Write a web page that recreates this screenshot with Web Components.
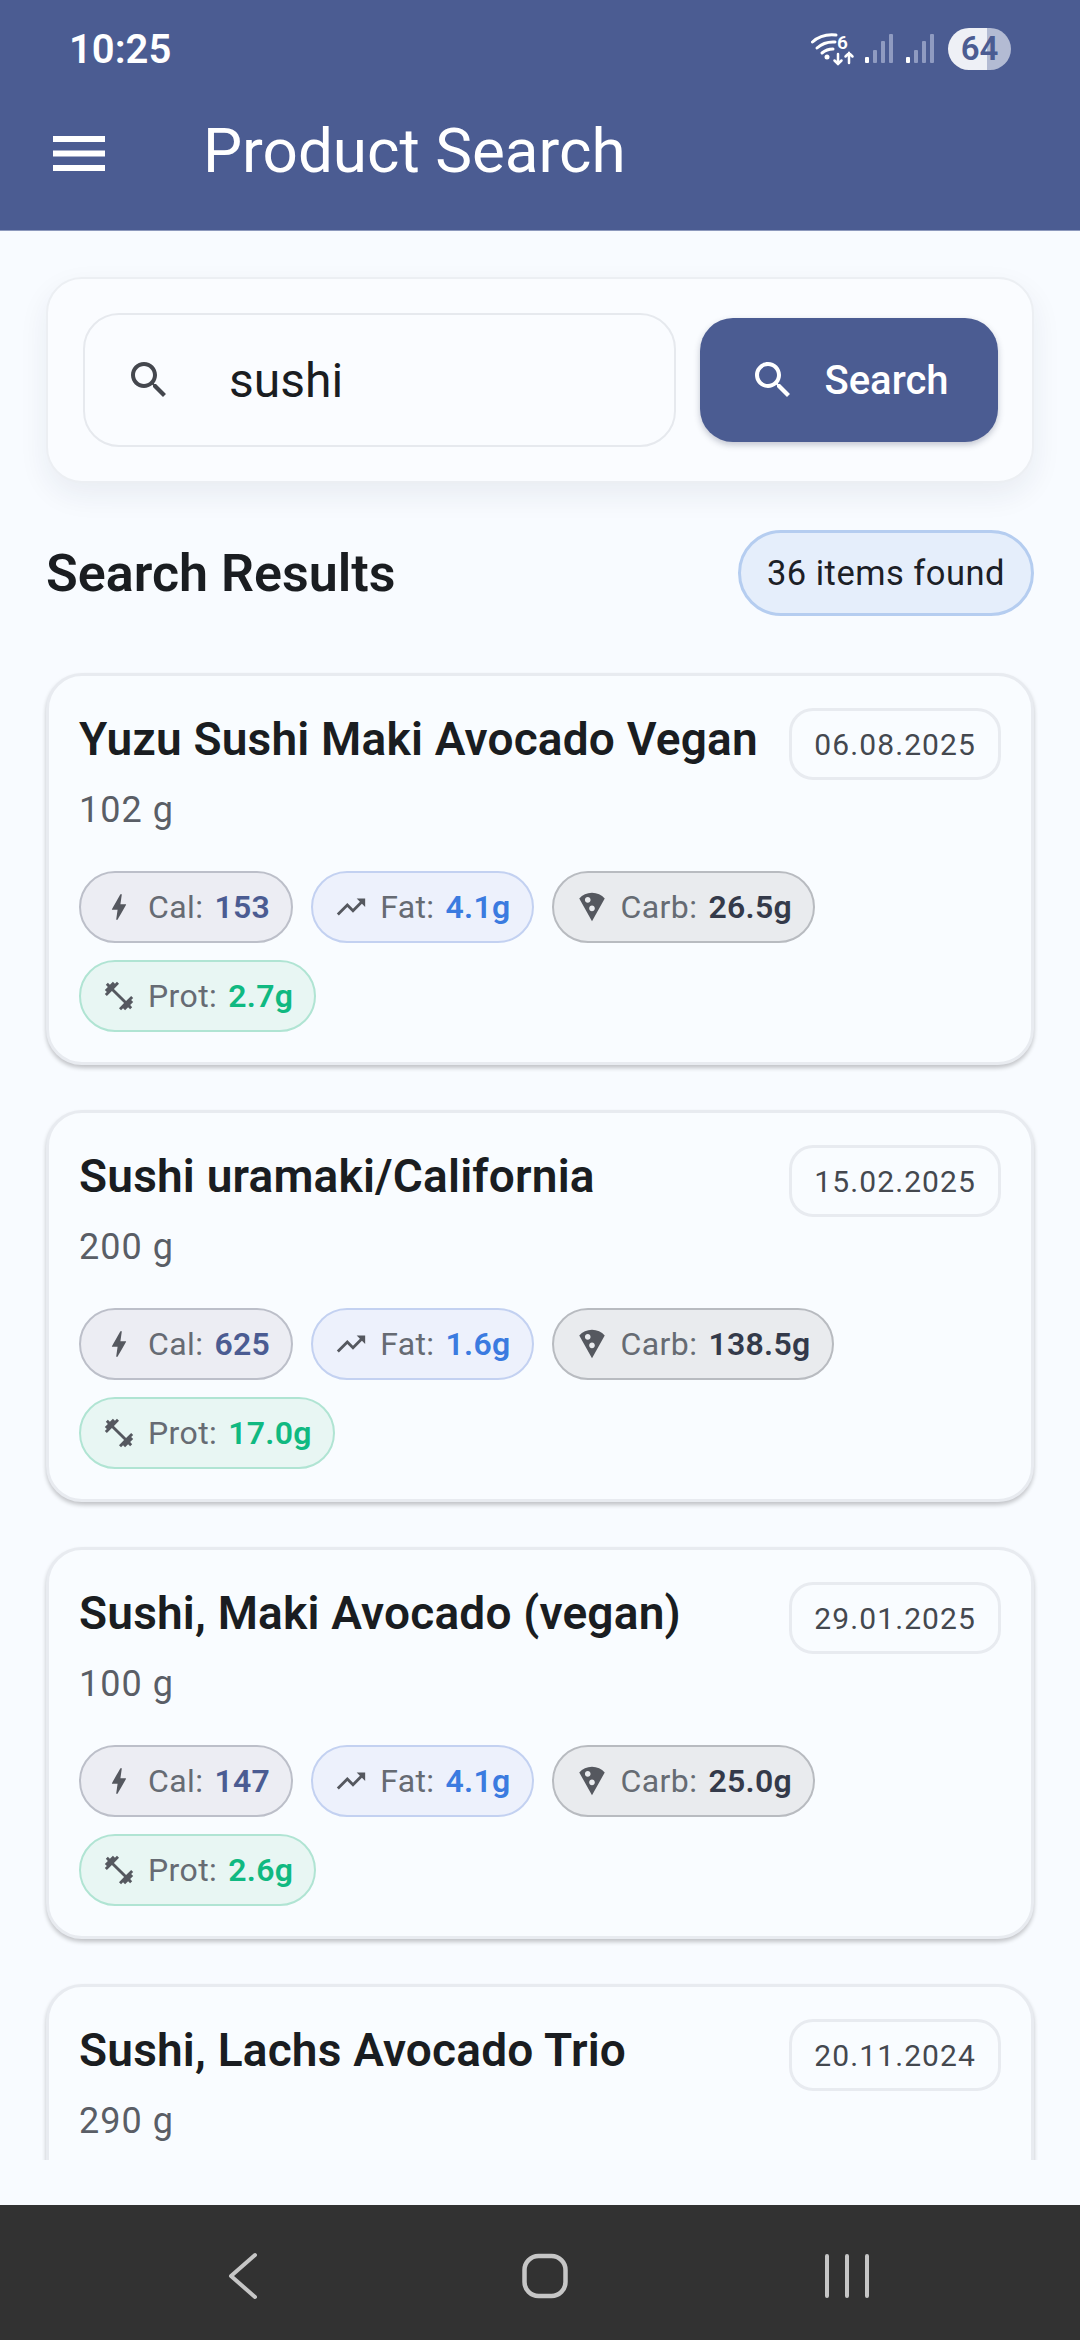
<!DOCTYPE html>
<html>
<head>
<meta charset="utf-8">
<title>Product Search</title>
<style>
  html, body { margin: 0; padding: 0; }
  body { width: 1080px; height: 2340px; overflow: hidden; display: flex; flex-direction: column; background: #f8fbff; font-family: Roboto, "Liberation Sans", sans-serif; }
</style>
</head>
<body>
<app-bar title="Product Search" time="10:25" battery="64"></app-bar>
<result-page>
  <search-panel query="sushi"></search-panel>
  <results-header count="36 items found">Search Results</results-header>
  <product-card name="Yuzu Sushi Maki Avocado Vegan" weight="102 g" date="06.08.2025">
    <macro-pill kind="cal" value="153"></macro-pill>
    <macro-pill kind="fat" value="4.1g"></macro-pill>
    <macro-pill kind="carb" value="26.5g"></macro-pill>
    <macro-pill kind="prot" value="2.7g"></macro-pill>
  </product-card>
  <product-card name="Sushi uramaki/California" weight="200 g" date="15.02.2025">
    <macro-pill kind="cal" value="625"></macro-pill>
    <macro-pill kind="fat" value="1.6g"></macro-pill>
    <macro-pill kind="carb" value="138.5g"></macro-pill>
    <macro-pill kind="prot" value="17.0g"></macro-pill>
  </product-card>
  <product-card name="Sushi, Maki Avocado (vegan)" weight="100 g" date="29.01.2025">
    <macro-pill kind="cal" value="147"></macro-pill>
    <macro-pill kind="fat" value="4.1g"></macro-pill>
    <macro-pill kind="carb" value="25.0g"></macro-pill>
    <macro-pill kind="prot" value="2.6g"></macro-pill>
  </product-card>
  <product-card name="Sushi, Lachs Avocado Trio" weight="290 g" date="20.11.2024"></product-card>
</result-page>
<nav-bar></nav-bar>

<script>
const SEARCH_PATH = 'M15.5 14h-.79l-.28-.27C15.41 12.59 16 11.11 16 9.5 16 5.91 13.09 3 9.5 3S3 5.91 3 9.5 5.91 16 9.5 16c1.61 0 3.09-.59 4.23-1.57l.27.28v.79l5 4.99L20.49 19l-4.99-5zm-6 0C7.01 14 5 11.99 5 9.5S7.01 5 9.5 5 14 7.01 14 9.5 11.99 14 9.5 14z';

class AppBar extends HTMLElement {
    constructor() {
        super();
        this.shadow = this.attachShadow({ mode: 'open' });
    }

    connectedCallback() {
        this.shadow.innerHTML = `
        <style>
        :host { display: block; flex: none; height: 231px; background: #4b5c92; color: #fff; border-bottom: 1px solid #8d99bd; box-sizing: border-box; }
        .status { display: flex; align-items: center; justify-content: space-between; height: 96px; padding: 2px 69px 0 69px; box-sizing: border-box; }
        .time { font: 600 40px Roboto, sans-serif; }
        .icons { display: flex; align-items: center; }
        .icons svg text { font: 600 19px Roboto, sans-serif; fill: #fff; }
        .battery { width: 63px; height: 42px; margin-left: 13px; border-radius: 21px; overflow: hidden; background: linear-gradient(90deg, #eef0f6 0 62%, #b3bbd3 62%); color: #4b5c92; font: 600 33px/42px Roboto, sans-serif; text-align: center; }
        .row { display: flex; align-items: center; height: 108px; padding-left: 53px; }
        .row svg { flex: none; width: 52px; height: 35px; margin: 6px 98px 0 0; }
        h1 { margin: 0; font: 400 62px Roboto, sans-serif; }
        </style>
        <div class="status">
            <span class="time">${this.getAttribute('time')}</span>
            <span class="icons">
                <svg width="124" height="42" viewBox="0 0 124 42" fill="none">
                    <g stroke="#fff" stroke-width="3" stroke-linecap="round">
                        <path d="M1.500 14C8 8 16 6 25 7"/><path d="M6 20C11 15.500 17 13.500 24 14"/><path d="M11 25C14 22.500 18 21 22 21"/>
                        <path d="M27 26v10m-3.500-3.500l3.500 3.500 3.500-3.500" stroke-width="2.500"/><path d="M38 35V25m-3.500 3.500l3.500-3.500 3.500 3.500" stroke-width="2.500"/>
                    </g>
                    <circle cx="16" cy="29" r="2.500" fill="#fff"/>
                    <text x="26" y="21">6</text>
                    <g fill="#8f9bc1">
                        <rect x="62" y="22" width="4" height="13" rx="1"/><rect x="70" y="13" width="4" height="22" rx="1"/><rect x="78" y="6" width="4" height="29" rx="1"/>
                        <rect x="103" y="22" width="4" height="13" rx="1"/><rect x="111" y="13" width="4" height="22" rx="1"/><rect x="119" y="6" width="4" height="29" rx="1"/>
                    </g>
                    <rect x="54" y="29" width="4" height="6" rx="1" fill="#fff"/><rect x="95" y="29" width="4" height="6" rx="1" fill="#fff"/>
                </svg>
                <span class="battery">${this.getAttribute('battery')}</span>
            </span>
        </div>
        <div class="row">
            <svg viewBox="0 0 52 35" fill="#fff"><rect width="52" height="6"/><rect y="14.500" width="52" height="6"/><rect y="29" width="52" height="6"/></svg>
            <h1>${this.getAttribute('title')}</h1>
        </div>
        `;
    }
}

class ResultPage extends HTMLElement {
    constructor() {
        super();
        this.shadow = this.attachShadow({ mode: 'open' });
    }

    connectedCallback() {
        this.shadow.innerHTML = `
        <style>
        :host { display: block; flex: none; height: 1929px; margin-bottom: 45px; overflow: hidden; }
        .list { display: flex; flex-direction: column; padding: 46px 46px 0; }
        </style>
        <div class="list"><slot></slot></div>
        `;
    }
}

class SearchPanel extends HTMLElement {
    constructor() {
        super();
        this.shadow = this.attachShadow({ mode: 'open' });
    }

    connectedCallback() {
        this.shadow.innerHTML = `
        <style>
        :host { display: flex; align-items: center; gap: 24px; height: 206px; padding: 0 34px 0 35px; box-sizing: border-box; background: #fafcff; border: 2px solid #eceff3; border-radius: 36px; box-shadow: 0 12px 30px rgba(30,40,70,.07); }
        .field { flex: 1; display: flex; align-items: center; height: 134px; padding-left: 40px; box-sizing: border-box; border: 2px solid #e6e9ee; border-radius: 36px; font: 400 48px Roboto, sans-serif; color: #1a1d21; }
        .field svg { width: 48px; height: 48px; margin-right: 56px; fill: #44474e; }
        button { display: flex; align-items: center; justify-content: center; flex: none; width: 298px; height: 124px; border: 0; border-radius: 33px; background: #4b5c92; color: #fff; font: 500 40px Roboto, sans-serif; box-shadow: 0 3px 6px rgba(30,40,70,.25); }
        button svg { width: 48px; height: 48px; margin-right: 27px; fill: #fff; }
        </style>
        <div class="field"><svg viewBox="0 0 24 24"><path d="${SEARCH_PATH}"/></svg><span>${this.getAttribute('query')}</span></div>
        <button><svg viewBox="0 0 24 24"><path d="${SEARCH_PATH}"/></svg>Search</button>
        `;
    }
}

class ResultsHeader extends HTMLElement {
    constructor() {
        super();
        this.shadow = this.attachShadow({ mode: 'open' });
    }

    connectedCallback() {
        this.shadow.innerHTML = `
        <style>
        :host { display: flex; align-items: center; justify-content: space-between; height: 86px; margin: 47px 0 57px; }
        h2 { margin: 0; font: 600 52px Roboto, sans-serif; color: #1a1d21; }
        .count { display: flex; align-items: center; height: 86px; padding: 0 26px; box-sizing: border-box; background: #e5eefb; border: 3px solid #b5cdf0; border-radius: 43px; font: 400 34.500px Roboto, sans-serif; letter-spacing: .5px; color: #1c2026; }
        </style>
        <h2><slot></slot></h2>
        <span class="count">${this.getAttribute('count')}</span>
        `;
    }
}

class ProductCard extends HTMLElement {
    constructor() {
        super();
        this.shadow = this.attachShadow({ mode: 'open' });
    }

    connectedCallback() {
        this.shadow.innerHTML = `
        <style>
        :host { display: block; flex: none; height: 392px; margin-bottom: 45px; padding: 32px 30px 0; box-sizing: border-box; background: #f9fcff; border: 3px solid #e8ebf0; border-radius: 36px; box-shadow: 0 3px 4px rgba(0,0,0,.22); }
        .top { display: flex; align-items: flex-start; justify-content: space-between; height: 72px; }
        h3 { margin: 0; padding-top: 4px; font: 600 46px/54px Roboto, sans-serif; letter-spacing: .2px; color: #1a1d21; }
        .date { display: flex; align-items: center; height: 72px; padding: 0 22px; box-sizing: border-box; border: 3px solid #e8ebf0; border-radius: 24px; font: 400 30px Roboto, sans-serif; letter-spacing: 1.100px; color: #44484f; }
        .weight { margin-top: 5px; font: 400 36px/50px Roboto, sans-serif; letter-spacing: 1px; color: #5a5e66; }
        .macros { display: flex; flex-wrap: wrap; gap: 17px 18px; margin-top: 36px; }
        </style>
        <div class="top"><h3>${this.getAttribute('name')}</h3><span class="date">${this.getAttribute('date')}</span></div>
        <div class="weight">${this.getAttribute('weight')}</div>
        <div class="macros"><slot></slot></div>
        `;
    }
}

const MACROS = {
    cal: { label: 'Cal:', bg: '#ecedf3', line: '#bcbfc9', value: '#4b5c92', icon: 'M11 21h-1l1-7H7.500c-.58 0-.57-.32-.38-.66.19-.34.05-.08.07-.12C8.48 10.940 10.420 7.540 13 3h1l-1 7h3.500c.49 0 .56.33.47.51l-.07.15C12.960 17.550 11 21 11 21z' },
    fat: { label: 'Fat:', bg: '#edf1fc', line: '#c3d1f1', value: '#3b7be0', icon: 'M16 6l2.290 2.290-4.880 4.880-4-4L2 16.590 3.410 18l6-6 4 4 6.300-6.290L22 12V6z' },
    carb: { label: 'Carb:', bg: '#e9ebee', line: '#b8bbc0', value: '#343a4a', icon: 'M12 2C8.430 2 5.230 3.540 3.010 6L12 22l8.990-16C18.780 3.550 15.570 2 12 2zM7 7c0-1.100.9-2 2-2s2 .9 2 2-.9 2-2 2-2-.9-2-2zm5 8c-1.100 0-2-.9-2-2s.9-2 2-2 2 .9 2 2-.9 2-2 2z' },
    prot: { label: 'Prot:', bg: '#e8f6f3', line: '#b0e4d3', value: '#10b981', icon: 'M20.570 14.860L22 13.430 20.570 12 17 15.570 8.430 7 12 3.430 10.570 2 9.140 3.430 7.710 2 5.570 4.140 4.140 2.710 2.710 4.140l1.430 1.430L2 7.710l1.430 1.430L2 10.570 3.430 12 7 8.430 15.570 17 12 20.570 13.430 22l1.430-1.430L16.290 22l2.140-2.140 1.430 1.430 1.430-1.430-1.430-1.430L22 16.290z' }
};

class MacroPill extends HTMLElement {
    constructor() {
        super();
        this.shadow = this.attachShadow({ mode: 'open' });
    }

    connectedCallback() {
        const macro = MACROS[this.getAttribute('kind')];
        this.shadow.innerHTML = `
        <style>
        :host { display: flex; align-items: center; height: 72px; padding: 0 21px 0 21px; box-sizing: border-box; background: ${macro.bg}; border: 2.500px solid ${macro.line}; border-radius: 36px; font: 400 32px Roboto, sans-serif; letter-spacing: .4px; color: #666b73; }
        svg { flex: none; width: 34px; height: 34px; margin-right: 12px; fill: #55585f; }
        b { margin-left: 11px; font-weight: 600; letter-spacing: .3px; color: ${macro.value}; }
        </style>
        <svg viewBox="0 0 24 24"><path d="${macro.icon}"/></svg><span>${macro.label}</span><b>${this.getAttribute('value')}</b>
        `;
    }
}

class NavBar extends HTMLElement {
    constructor() {
        super();
        this.shadow = this.attachShadow({ mode: 'open' });
    }

    connectedCallback() {
        this.shadow.innerHTML = `
        <style>
        :host { display: flex; flex: none; justify-content: center; align-items: center; height: 135px; padding: 6px 0 0 10px; box-sizing: border-box; background: #323232; }
        .slot { display: flex; justify-content: center; width: 302px; }
        svg { width: 60px; height: 60px; fill: none; stroke: #c6c6c6; stroke-width: 4; stroke-linecap: round; stroke-linejoin: round; }
        </style>
        <span class="slot"><svg viewBox="0 0 60 60"><path d="M42 9L18 30l24 21"/></svg></span>
        <span class="slot"><svg viewBox="0 0 60 60"><rect x="9.500" y="10" width="41" height="40" rx="14" stroke-width="4.500"/></svg></span>
        <span class="slot"><svg viewBox="0 0 60 60"><path d="M10 10v40M30 10v40M50 10v40"/></svg></span>
        `;
    }
}

customElements.define('app-bar', AppBar);
customElements.define('result-page', ResultPage);
customElements.define('search-panel', SearchPanel);
customElements.define('results-header', ResultsHeader);
customElements.define('product-card', ProductCard);
customElements.define('macro-pill', MacroPill);
customElements.define('nav-bar', NavBar);
</script>
</body>
</html>
